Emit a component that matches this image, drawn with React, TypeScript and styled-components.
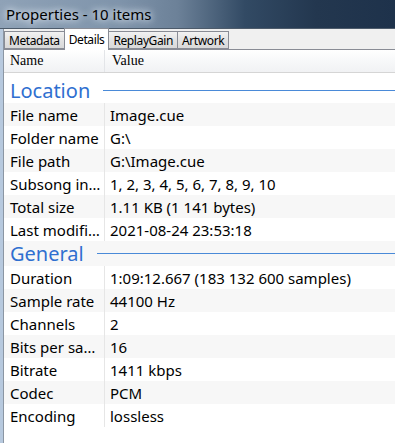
import styled, { createGlobalStyle } from "styled-components";

const GlobalStyle = createGlobalStyle`
  html, body {
    margin: 0;
    padding: 0;
    background: #ffffff;
  }
`;

const Window = styled.div`
  width: 395px;
  height: 443px;
  display: flex;
  flex-direction: column;
  overflow: hidden;
  font-family: "Noto Sans", "Open Sans", sans-serif;
`;

const TitleBar = styled.div`
  height: 28px;
  flex-shrink: 0;
  display: flex;
  align-items: center;
  padding-left: 6px;
  background: linear-gradient(
    90deg,
    #8fa2b7 0%,
    #7f94ab 30%,
    #6c8198 45%,
    #324a64 62%,
    #23374f 80%,
    #1e324b 100%
  );
  border-bottom: 1px solid #4d5b6b;
`;

const Title = styled.span`
  font-size: 15px;
  color: #000;
  text-shadow: 0 0 6px #e8eef5, 0 0 10px #dde6f0;
`;

const Body = styled.div`
  flex: 1;
  display: flex;
  flex-direction: column;
  border-left: 3px solid #b7c9de;
  background: #f0f0f0;
`;

const Inner = styled.div`
  flex: 1;
  display: flex;
  flex-direction: column;
  border-left: 1px solid #8b96a3;
`;

const TabStrip = styled.div`
  height: 20px;
  display: flex;
  align-items: flex-end;
  border-bottom: 1px solid #898c95;
`;

const Tab = styled.div<{ active?: boolean }>`
  height: ${({ active }) => (active ? "21px" : "16px")};
  padding: 0 4px;
  margin-bottom: ${({ active }) => (active ? "-1px" : "0")};
  display: flex;
  align-items: center;
  font-size: 12px;
  letter-spacing: -0.4px;
  color: #000;
  border: 1px solid #898c95;
  border-bottom: ${({ active }) => (active ? "none" : "1px solid #898c95")};
  margin-left: -1px;
  background: ${({ active }) =>
    active ? "#ffffff" : "linear-gradient(#f2f2f2, #e3e3e3 50%, #d9d9d9)"};
  &:first-child {
    margin-left: 0;
  }
`;

const Panel = styled.div`
  flex: 1;
  background: #ffffff;
  display: flex;
  flex-direction: column;
`;

const Header = styled.div`
  height: 22px;
  display: grid;
  grid-template-columns: 101px 1fr;
  background: linear-gradient(#ffffff, #f7f8f9 50%, #f1f2f4);
  border-bottom: 1px solid #d5d5d5;
`;

const HeaderCell = styled.div<{ divider?: boolean }>`
  display: flex;
  align-items: center;
  padding-left: ${({ divider }) => (divider ? "6px" : "7px")};
  font-family: "Liberation Serif", "DejaVu Serif", serif;
  font-size: 14px;
  color: #000;
  border-right: ${({ divider }) => (divider ? "1px solid #e3e5e8" : "none")};
`;

const List = styled.div`
  display: grid;
  grid-template-columns: 101px 1fr;
`;

const GroupRow = styled.div<{ shaded?: boolean; first?: boolean }>`
  grid-column: 1 / span 2;
  height: 25px;
  padding-top: ${({ first }) => (first ? "5px" : "0")};
  display: flex;
  align-items: center;
  gap: 13px;
  padding-left: 6px;
  background: ${({ shaded }) => (shaded ? "#f7f7f7" : "#ffffff")};
`;

const GroupTitle = styled.span`
  font-size: 20px;
  line-height: 25px;
  color: #2f6fd0;
`;

const GroupLine = styled.div`
  flex: 1;
  height: 1px;
  background: #4a8ad8;
`;

const Cell = styled.div<{ shaded?: boolean; name?: boolean }>`
  height: 23px;
  display: flex;
  align-items: center;
  padding-left: ${({ name }) => (name ? "6px" : "5px")};
  font-size: 15px;
  color: #000;
  white-space: nowrap;
  overflow: hidden;
  background: ${({ shaded }) => (shaded ? "#f7f7f7" : "#ffffff")};
  border-right: ${({ name }) => (name ? "1px solid #e6e6e6" : "none")};
`;

type Item = { group: string } | { name: string; value: string };

const items: Item[] = [
  { group: "Location" },
  { name: "File name", value: "Image.cue" },
  { name: "Folder name", value: "G:\\" },
  { name: "File path", value: "G:\\Image.cue" },
  { name: "Subsong in…", value: "1, 2, 3, 4, 5, 6, 7, 8, 9, 10" },
  { name: "Total size", value: "1.11 KB (1 141 bytes)" },
  { name: "Last modifi…", value: "2021-08-24 23:53:18" },
  { group: "General" },
  { name: "Duration", value: "1:09:12.667 (183 132 600 samples)" },
  { name: "Sample rate", value: "44100 Hz" },
  { name: "Channels", value: "2" },
  { name: "Bits per sa…", value: "16" },
  { name: "Bitrate", value: "1411 kbps" },
  { name: "Codec", value: "PCM" },
  { name: "Encoding", value: "lossless" },
];

const tabs = ["Metadata", "Details", "ReplayGain", "Artwork"];

const App = () => {
  return (
    <>
      <GlobalStyle />
      <Window>
        <TitleBar>
          <Title>Properties - 10 items</Title>
        </TitleBar>
        <Body>
          <Inner>
            <TabStrip>
              {tabs.map((t) => (
                <Tab key={t} active={t === "Details"}>
                  {t}
                </Tab>
              ))}
            </TabStrip>
            <Panel>
              <Header>
                <HeaderCell divider>Name</HeaderCell>
                <HeaderCell>Value</HeaderCell>
              </Header>
              <List>
                {items.map((it, i) =>
                  "group" in it ? (
                    <GroupRow
                      key={it.group}
                      shaded={i % 2 === 1}
                      first={i === 0}
                    >
                      <GroupTitle>{it.group}</GroupTitle>
                      <GroupLine />
                    </GroupRow>
                  ) : (
                    [
                      <Cell key={it.name + "n"} name shaded={i % 2 === 1}>
                        {it.name}
                      </Cell>,
                      <Cell key={it.name + "v"} shaded={i % 2 === 1}>
                        {it.value}
                      </Cell>,
                    ]
                  )
                )}
              </List>
            </Panel>
          </Inner>
        </Body>
      </Window>
    </>
  );
};

export default App;
